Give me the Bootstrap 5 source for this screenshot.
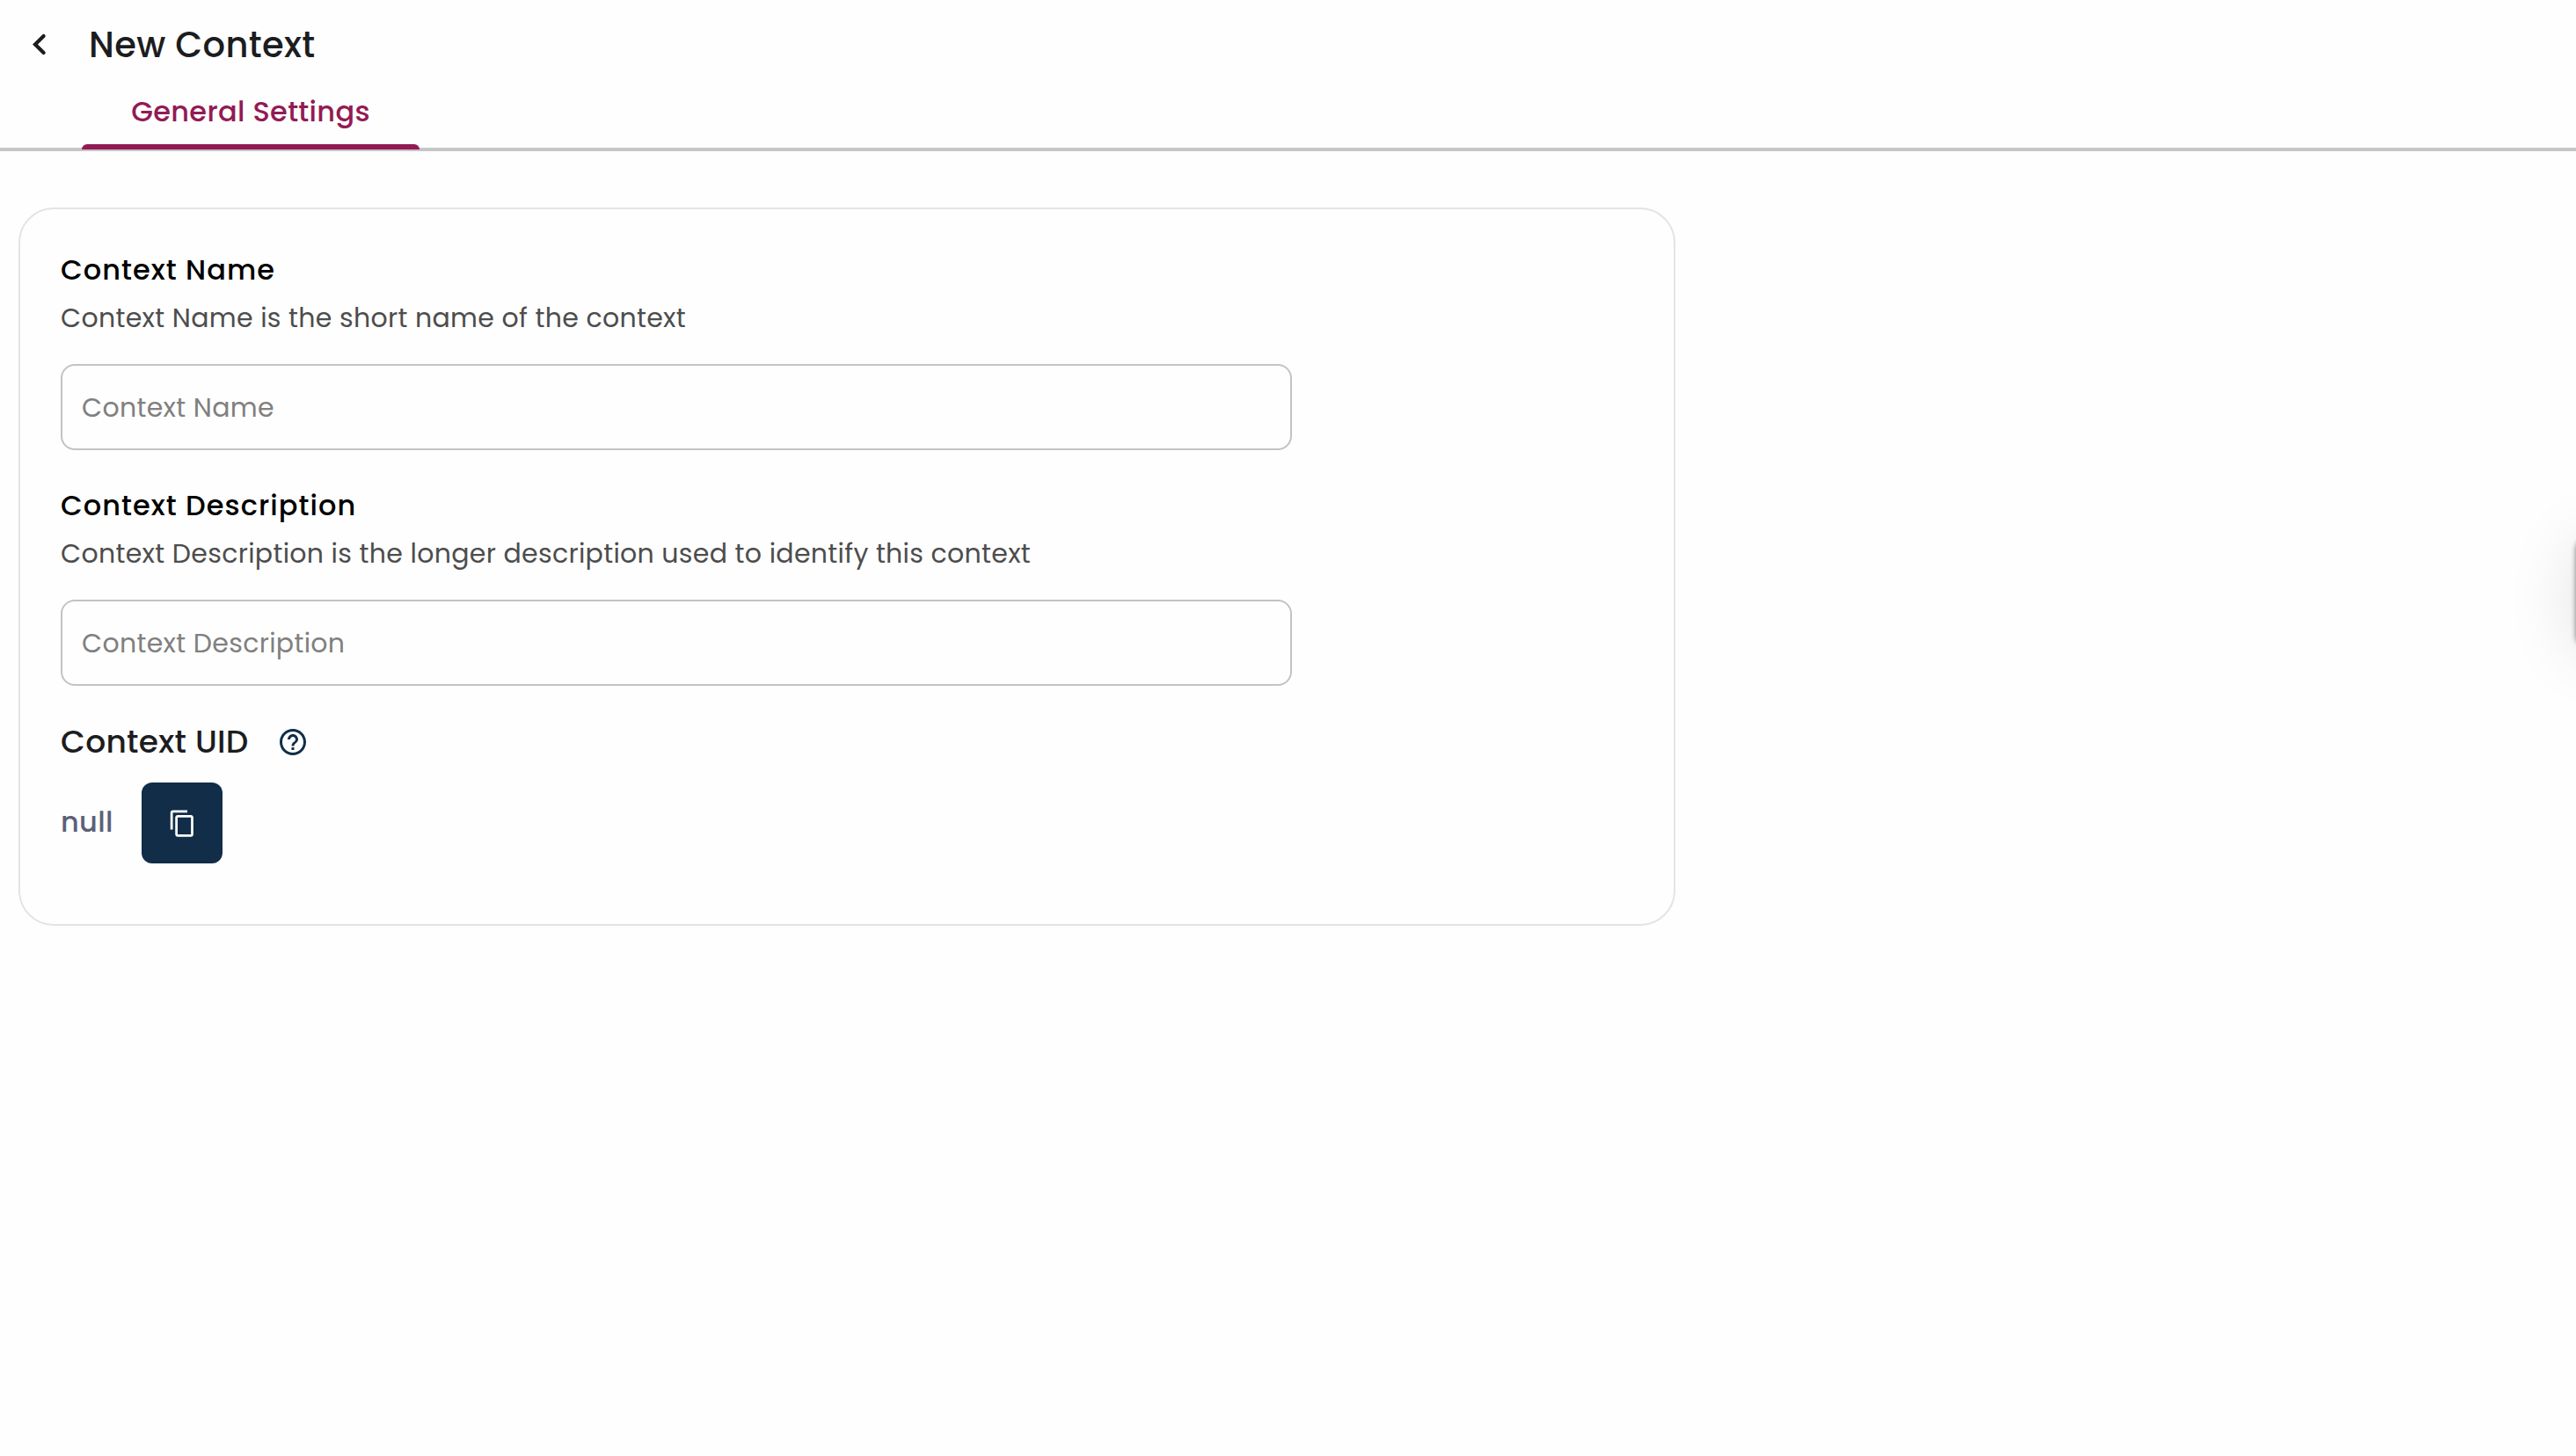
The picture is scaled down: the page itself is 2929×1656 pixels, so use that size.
<!DOCTYPE html>
<html lang="en">
<head>
    <meta charset="UTF-8">
    <meta name="viewport" content="width=device-width, initial-scale=1.0">
    <title>New Context</title>
    <link href="https://cdn.jsdelivr.net/npm/bootstrap@5.3.0/dist/css/bootstrap.min.css" rel="stylesheet">
    <script src="https://cdn.jsdelivr.net/npm/bootstrap@5.3.0/dist/js/bootstrap.bundle.min.js"></script>
    <style>
        body {
            font-family: Poppins, Inter, sans-serif;
            background: #fefefe;
            color: #1c1d1f;
            min-height: 100vh;
            overflow: hidden;
        }

        /* Header */
        .page-header { border-bottom: 4px solid #c6c5ca; }
        .title-row { height: 101px; padding-left: 20px; }
        .back-btn { width: 48px; height: 48px; }
        .page-title { font-size: 40px; line-height: 52px; letter-spacing: .35px; margin-left: 33px; }
        .page-tabs { padding-left: 93px; }
        .page-tabs .nav-link {
            width: 384px;
            height: 69px;
            margin-bottom: -2px;
            font-size: 32px;
            line-height: 52px;
            letter-spacing: .32px;
            color: #921b54;
        }
        .page-tabs .nav-link::after {
            content: "";
            position: absolute;
            left: 0;
            right: 0;
            bottom: 0;
            height: 6px;
            border-radius: 6px 6px 0 0;
            background: #921b54;
        }

        /* Form */
        .settings-card {
            width: 1884px;
            margin: 64px 0 0 21px;
            padding: 42px 46px 69px;
            border: 2px solid #e4e4e4;
            border-radius: 40px;
            background: #fefefe;
        }
        .field { width: 1400px; margin-bottom: 36px; }
        .field .form-label { font-size: 32px; line-height: 54px; letter-spacing: 1.04px; color: #000; }
        .field .form-text { font-size: 30px; line-height: 56px; letter-spacing: .3px; color: #4d4d4d; }
        .field .form-control {
            height: 98px;
            margin-top: 24px;
            padding: 2px 22px 0;
            font-size: 30px;
            letter-spacing: .3px;
            border: 2px solid #c3c3c3;
            border-radius: 16px;
            background: #fefefe;
        }
        .field .form-control::placeholder { color: #808080; }

        .uid-title { font-size: 36px; line-height: 56px; letter-spacing: .3px; }
        .help-icon { margin-left: 32px; color: #112d47; }
        .uid-row { margin-top: 18px; }
        .uid-value { width: 92px; font-size: 32px; line-height: 90px; letter-spacing: .32px; color: #5c6078; }
        .copy-btn { width: 92px; height: 92px; border-radius: 12px; background: #112d47; color: #fff; }

        /* Collapsed drawer handle, sits just past the right edge */
        .drawer-handle {
            position: fixed;
            left: 100%;
            top: 613px;
            width: 90px;
            height: 122px;
            border-radius: 12px;
            box-shadow: 0 0 6px rgba(0, 0, 0, .5), 0 6px 80px rgba(0, 0, 0, .12);
        }
    </style>
</head>
<body>

<header class="page-header">
    <div class="title-row d-flex align-items-center">
        <button type="button" class="back-btn btn p-0 border-0 d-flex align-items-center justify-content-center" aria-label="Back">
            <svg width="48" height="48" viewBox="0 0 48 48" fill="none" stroke="#1c1d1f" stroke-width="4.2" stroke-linecap="round">
                <path d="M29.6 14 20 23.5 29.6 33"/>
            </svg>
        </button>
        <h1 class="page-title fw-medium mb-0">New Context</h1>
    </div>
    <ul class="page-tabs nav">
        <li class="nav-item">
            <a class="nav-link active position-relative p-0 text-center fw-medium" href="#">General Settings</a>
        </li>
    </ul>
</header>

<main class="settings-card">
    <div class="field">
        <label for="contextName" class="form-label d-block fw-medium mb-0">Context Name</label>
        <div class="form-text mt-0">Context Name is the short name of the context</div>
        <input type="text" id="contextName" class="form-control" placeholder="Context Name">
    </div>

    <div class="field">
        <label for="contextDescription" class="form-label d-block fw-medium mb-0">Context Description</label>
        <div class="form-text mt-0">Context Description is the longer description used to identify this context</div>
        <input type="text" id="contextDescription" class="form-control" placeholder="Context Description">
    </div>

    <div class="d-flex align-items-center">
        <h2 class="uid-title fw-medium mb-0">Context UID</h2>
        <svg class="help-icon" width="36" height="36" viewBox="0 0 24 24" fill="currentColor">
            <path d="M11 18h2v-2h-2v2zm1-16C6.48 2 2 6.48 2 12s4.48 10 10 10 10-4.48 10-10S17.52 2 12 2zm0 18c-4.41 0-8-3.59-8-8s3.59-8 8-8 8 3.59 8 8-3.59 8-8 8zm0-14c-2.21 0-4 1.79-4 4h2c0-1.1.9-2 2-2s2 .9 2 2c0 2-3 1.75-3 5h2c0-2.25 3-2.5 3-5 0-2.21-1.79-4-4-4z"/>
        </svg>
    </div>
    <div class="uid-row d-flex">
        <span class="uid-value fw-medium">null</span>
        <button type="button" class="copy-btn btn p-0 border-0 d-flex align-items-center justify-content-center" aria-label="Copy">
            <svg width="33" height="33" viewBox="0 0 24 24" fill="currentColor">
                <path d="M16 1H4c-1.1 0-2 .9-2 2v14h2V3h12V1zm3 4H8c-1.1 0-2 .9-2 2v14c0 1.1.9 2 2 2h11c1.1 0 2-.9 2-2V7c0-1.1-.9-2-2-2zm0 16H8V7h11v14z"/>
            </svg>
        </button>
    </div>
</main>

<div class="drawer-handle"></div>

</body>
</html>
